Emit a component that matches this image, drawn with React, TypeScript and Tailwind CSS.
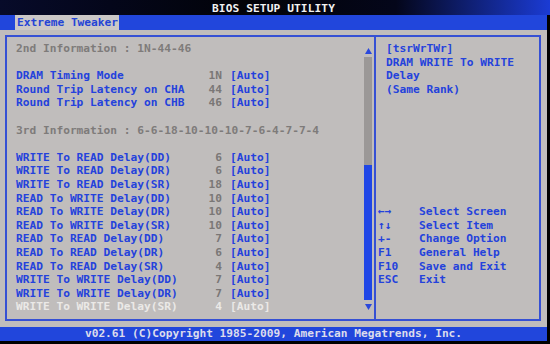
import React from "react";

const rows: { label?: string; num?: string; kind: "info" | "item" | "blank" | "sel" }[] = [
  { label: "2nd Information : 1N-44-46", kind: "info" },
  { kind: "blank" },
  { label: "DRAM Timing Mode", num: "1N", kind: "item" },
  { label: "Round Trip Latency on CHA", num: "44", kind: "item" },
  { label: "Round Trip Latency on CHB", num: "46", kind: "item" },
  { kind: "blank" },
  { label: "3rd Information : 6-6-18-10-10-10-7-6-4-7-7-4", kind: "info" },
  { kind: "blank" },
  { label: "WRITE To READ Delay(DD)", num: "6", kind: "item" },
  { label: "WRITE To READ Delay(DR)", num: "6", kind: "item" },
  { label: "WRITE To READ Delay(SR)", num: "18", kind: "item" },
  { label: "READ To WRITE Delay(DD)", num: "10", kind: "item" },
  { label: "READ To WRITE Delay(DR)", num: "10", kind: "item" },
  { label: "READ To WRITE Delay(SR)", num: "10", kind: "item" },
  { label: "READ To READ Delay(DD)", num: "7", kind: "item" },
  { label: "READ To READ Delay(DR)", num: "6", kind: "item" },
  { label: "READ To READ Delay(SR)", num: "4", kind: "item" },
  { label: "WRITE To WRITE Delay(DD)", num: "7", kind: "item" },
  { label: "WRITE To WRITE Delay(DR)", num: "7", kind: "item" },
  { label: "WRITE To WRITE Delay(SR)", num: "4", kind: "sel" },
];

const legend = [
  ["←→", "Select Screen"],
  ["↑↓", "Select Item"],
  ["+-", "Change Option"],
  ["F1", "General Help"],
  ["F10", "Save and Exit"],
  ["ESC", "Exit"],
];

export default function App() {
  const font = { fontFamily: "'DejaVu Sans Mono', 'Liberation Mono', monospace" };
  return (
    <div
      className="w-[550px] h-[344px] bg-black flex flex-col overflow-hidden text-[11.2px] font-bold"
      style={font}
    >
      {/* Title bar */}
      <div className="h-[15px] pr-[3px] bg-[linear-gradient(to_right,#070b2a_0%,#04061a_20%,#020308_45%,#04061a_72%,#1b3bd4_100%)] flex justify-center">
        <span className="text-[#f2f2f2] leading-[12px] pt-[3px] tracking-[0.1px]">BIOS SETUP UTILITY</span>
      </div>
      {/* Tab bar */}
      <div className="h-[15px] mr-[3px] bg-[#2146dc] flex">
        <div className="ml-[15px] w-[104px] bg-[#cbc8c7] text-[#2444d6] leading-[15px] pl-[2px]">
          Extreme Tweaker
        </div>
      </div>
      {/* Main */}
      <div className="h-[297px] mr-[3px] bg-[#c0bdbc] pl-[5px] pr-[6px] pt-[5px] pb-[6px]">
        <div className="h-full border-2 border-[#3550d4] flex">
          {/* Left panel */}
          <div className="flex-1 pl-[9px] pt-[5px] leading-[13.6px]">
            {rows.map((r, i) => {
              if (r.kind === "blank") return <div key={i} className="h-[13.6px]" />;
              if (r.kind === "info")
                return (
                  <div key={i} className="h-[13.6px] text-[#7e7b7a] whitespace-pre">
                    {r.label}
                  </div>
                );
              const color = r.kind === "sel" ? "text-[#ebe9e7]" : "text-[#2442dc]";
              const numColor = r.kind === "sel" ? "text-[#ebe9e7]" : "text-[#7a7776]";
              return (
                <div key={i} className={`h-[13.6px] flex whitespace-pre ${color}`}>
                  <span className="w-[180px]">{r.label}</span>
                  <span className={`w-[26px] text-right ${numColor}`}>{r.num}</span>
                  <span className="ml-[8px]">[Auto]</span>
                </div>
              );
            })}
          </div>
          {/* Scrollbar */}
          <div className="w-[8px] mr-[2px] flex flex-col items-center pt-[11px]">
            <svg width="7" height="6" viewBox="0 0 7 6">
              <polygon points="3.5,0 7,6 0,6" fill="#2a48dc" />
            </svg>
            <div className="mt-[3px] h-[243px] w-[8px] flex flex-col">
              <div className="h-[108px] bg-[#9b9897]" />
              <div className="flex-1 bg-[#1f46e6]" />
            </div>
            <svg width="7" height="6" viewBox="0 0 7 6" className="mt-[4px]">
              <polygon points="0,0 7,0 3.5,6" fill="#2a48dc" />
            </svg>
          </div>
          {/* Right panel */}
          <div className="w-[165px] border-l-2 border-[#3550d4] pl-[2px] pt-[5px] leading-[13.6px] text-[#2442dc] flex flex-col">
            <div className="pl-[8px] whitespace-pre">
              <div className="h-[13.6px]">[tsrWrTWr]</div>
              <div className="h-[13.6px]">DRAM WRITE To WRITE</div>
              <div className="h-[13.6px]">Delay</div>
              <div className="h-[13.6px]">(Same Rank)</div>
            </div>
            <div className="mt-[108.8px] whitespace-pre">
              {legend.map(([k, d]) => (
                <div key={k} className="h-[13.6px] flex">
                  <span className="w-[41px]">{k}</span>
                  <span>{d}</span>
                </div>
              ))}
            </div>
          </div>
        </div>
      </div>
      {/* Footer */}
      <div className="h-[14px] mr-[3px] bg-[#2146dc] flex justify-center">
        <span className="text-[#dcdcec] leading-[14px] whitespace-pre">
          v02.61 (C)Copyright 1985-2009, American Megatrends, Inc.
        </span>
      </div>
    </div>
  );
}
